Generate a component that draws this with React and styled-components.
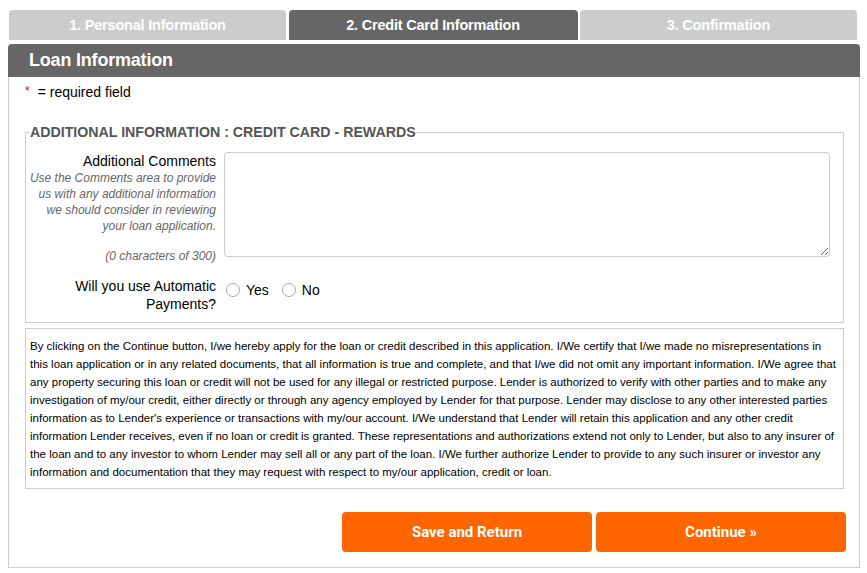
import React, { useState } from 'react'
import styled, { createGlobalStyle } from 'styled-components';

const GlobalStyle = createGlobalStyle`
    body {
        margin: 0;
        background: #fff;
        font-family: "Liberation Sans", Arial, sans-serif;
        color: #000;
    }
`;

const steps = [
    { label: '1. Personal Information', width: 277 },
    { label: '2. Credit Card Information', width: 289, active: true },
    { label: '3. Confirmation', width: 277 },
];

const disclaimer = "By clicking on the Continue button, I/we hereby apply for the loan or credit described in this application. I/We certify that I/we made no misrepresentations in this loan application or in any related documents, that all information is true and complete, and that I/we did not omit any important information. I/We agree that any property securing this loan or credit will not be used for any illegal or restricted purpose. Lender is authorized to verify with other parties and to make any investigation of my/our credit, either directly or through any agency employed by Lender for that purpose. Lender may disclose to any other interested parties information as to Lender's experience or transactions with my/our account. I/We understand that Lender will retain this application and any other credit information Lender receives, even if no loan or credit is granted. These representations and authorizations extend not only to Lender, but also to any insurer of the loan and to any investor to whom Lender may sell all or any part of the loan. I/We further authorize Lender to provide to any such insurer or investor any information and documentation that they may request with respect to my/our application, credit or loan.";

const App = () => {
    const [comments, setComments] = useState('');
    const [autoPay, setAutoPay] = useState('');

    return (
        <Page>
            <GlobalStyle />
            <StepTabs>
                {steps.map((step) => (
                    <StepTab key={step.label} $active={step.active} $width={step.width}>{step.label}</StepTab>
                ))}
            </StepTabs>
            <Panel>
                <PanelHeader>Loan Information</PanelHeader>
                <PanelBody>
                    <RequiredNote><span>*</span>= required field</RequiredNote>
                    <Section>
                        <legend>Additional Information : Credit Card - Rewards</legend>
                        <FieldRow>
                            <FieldLabel>
                                <label htmlFor="comments">Additional Comments</label>
                                <Hint>Use the Comments area to provide us with any additional information we should consider in reviewing your loan application.</Hint>
                                <Counter>({comments.length} characters of 300)</Counter>
                            </FieldLabel>
                            <Comments id="comments" maxLength={300} value={comments} onChange={(e) => setComments(e.target.value)} />
                        </FieldRow>
                        <FieldRow $spaced>
                            <FieldLabel>Will you use Automatic Payments?</FieldLabel>
                            <RadioGroup>
                                <RadioOption>
                                    <input type="radio" name="auto_pay" value="yes" checked={autoPay === 'yes'} onChange={() => setAutoPay('yes')} />
                                    Yes
                                </RadioOption>
                                <RadioOption>
                                    <input type="radio" name="auto_pay" value="no" checked={autoPay === 'no'} onChange={() => setAutoPay('no')} />
                                    No
                                </RadioOption>
                            </RadioGroup>
                        </FieldRow>
                    </Section>
                    <Disclaimer>{disclaimer}</Disclaimer>
                    <Actions>
                        <ActionButton type="button">Save and Return</ActionButton>
                        <ActionButton type="button">Continue »</ActionButton>
                    </Actions>
                </PanelBody>
            </Panel>
        </Page>
    )
}

const Page = styled.div`
    width: 852px;
    padding: 10px 0 0 8px;
`;

const StepTabs = styled.div`
    display: flex;
    gap: 2.5px;
    margin: 0 0 4px 1px;
`;

const StepTab = styled.div`
    width: ${(p) => p.$width}px;
    height: 30px;
    display: flex;
    align-items: center;
    justify-content: center;
    border-radius: 4px 4px 0 0;
    background: ${(p) => (p.$active ? '#666' : '#ccc')};
    color: #fff;
    font-size: 14.5px;
    font-weight: bold;
    letter-spacing: -0.2px;
`;

const Panel = styled.div`
    border: 1px solid #ccc;
    border-top: none;
    border-radius: 4px 4px 0 0;
`;

const PanelHeader = styled.div`
    height: 33px;
    margin: 0 -1px;
    padding-left: 21px;
    display: flex;
    align-items: center;
    background: #666;
    border-radius: 4px 4px 0 0;
    color: #fff;
    font-size: 18px;
    font-weight: bold;
    letter-spacing: -0.2px;
`;

const PanelBody = styled.div`
    padding: 5px 15px 15px 16px;
`;

const RequiredNote = styled.div`
    font-size: 14px;
    line-height: 18px;
    span {
        color: #e00;
        font-size: 12px;
        margin-right: 8px;
        vertical-align: 2px;
    }
`;

const Section = styled.fieldset`
    margin: 24px 0 0;
    padding: 13px 12px 9px 0;
    border: 1px solid #ccc;
    legend {
        margin-left: 4px;
        padding: 0;
        color: #555;
        font-size: 14.2px;
        line-height: 14px;
        font-weight: bold;
        text-transform: uppercase;
    }
`;

const FieldRow = styled.div`
    display: grid;
    grid-template-columns: 190px 1fr;
    column-gap: 8px;
    margin-top: ${(p) => (p.$spaced ? '13px' : '0')};
`;

const FieldLabel = styled.div`
    text-align: right;
    font-size: 14px;
    line-height: 18px;
`;

const Hint = styled.div`
    color: #666;
    font-size: 12px;
    line-height: 16px;
    font-style: italic;
`;

const Counter = styled(Hint)`
    margin-top: 14px;
`;

const Comments = styled.textarea`
    box-sizing: border-box;
    width: 606px;
    height: 105px;
    margin: 0;
    border: 1px solid #ccc;
    border-radius: 4px;
    font-family: inherit;
    font-size: 13px;
`;

const RadioGroup = styled.div`
    display: flex;
    align-items: center;
    gap: 13px;
    height: 26px;
    padding-left: 2px;
`;

const RadioOption = styled.label`
    display: flex;
    align-items: center;
    gap: 6px;
    font-size: 14px;
    input {
        appearance: none;
        box-sizing: border-box;
        width: 14px;
        height: 14px;
        margin: 0;
        border: 1px solid #aaa;
        border-radius: 50%;
        background: #fff;
    }
    input:checked {
        border: 4px solid #1a73e8;
    }
`;

const Disclaimer = styled.p`
    margin: 5px 0 0;
    padding: 8px 3px 7px 4px;
    border: 1px solid #ccc;
    font-size: 11.5px;
    line-height: 18px;
`;

const Actions = styled.div`
    display: flex;
    justify-content: flex-end;
    gap: 4px;
    margin: 23px -2px 0 0;
`;

const ActionButton = styled.button`
    width: 250px;
    height: 40px;
    border: none;
    border-radius: 4px;
    background: #ff6600;
    color: #fff;
    font-family: Roboto, "Liberation Sans", sans-serif;
    font-size: 15px;
    font-weight: bold;
    cursor: pointer;
    &:hover {
        background: #e65c00;
    }
`;

export default App
